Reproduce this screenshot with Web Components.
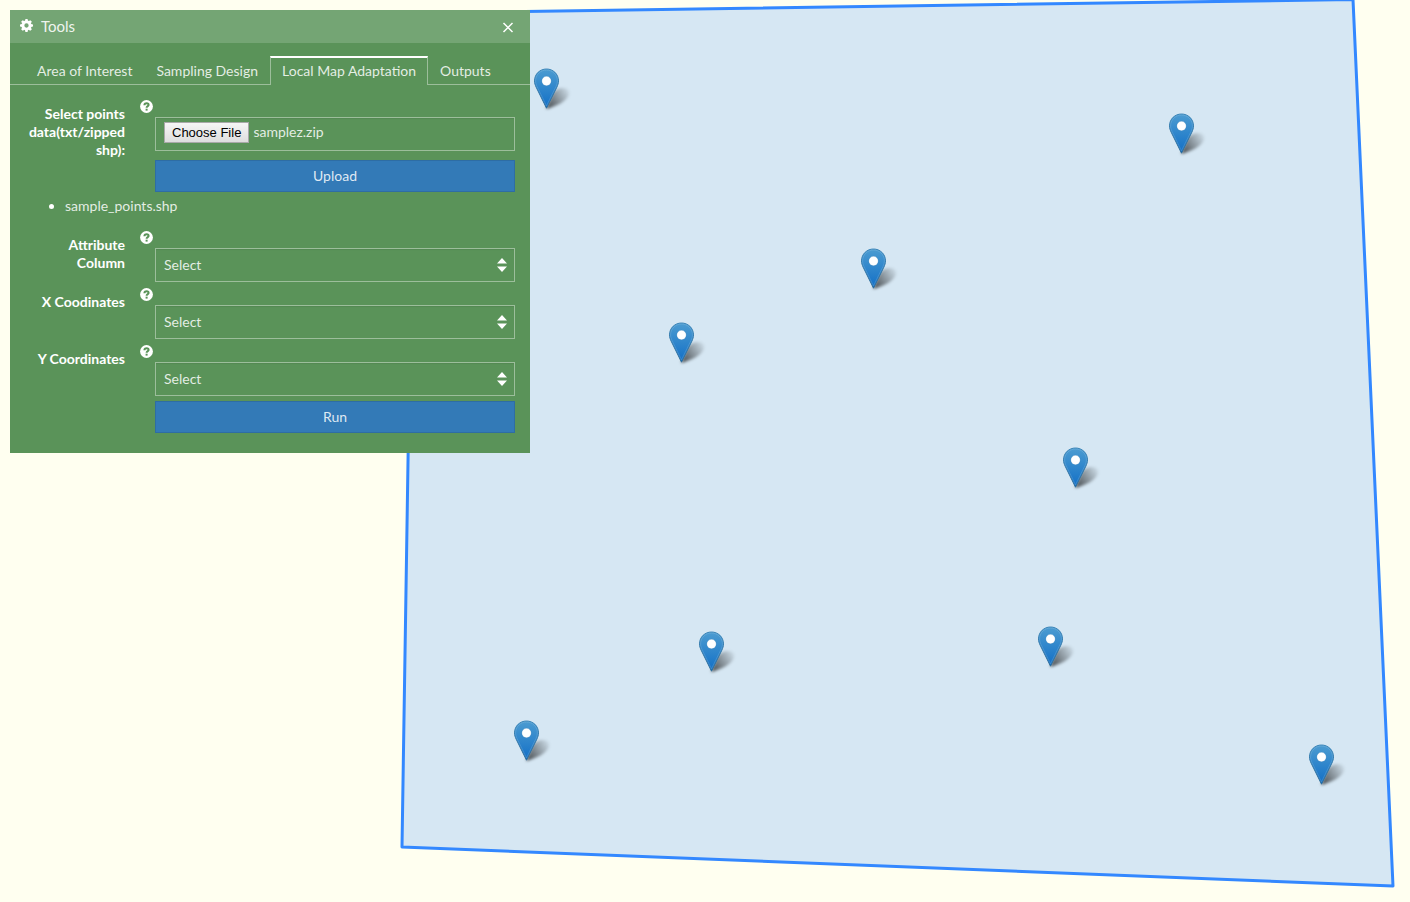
<!DOCTYPE html>
<html lang="en">
<head>
<meta charset="utf-8">
<title>Local Map Adaptation</title>
<style>
  html, body { height: 100%; }
  body { margin: 0; background: #fffff0; overflow: hidden; font: 14px/18px Lato, "Open Sans", sans-serif; color: rgba(255, 255, 255, .85); }
</style>
</head>
<body>
<map-view>
  <map-marker x="546" y="109"></map-marker>
  <map-marker x="1181" y="154"></map-marker>
  <map-marker x="873" y="289"></map-marker>
  <map-marker x="681" y="363"></map-marker>
  <map-marker x="1075" y="488"></map-marker>
  <map-marker x="711" y="672"></map-marker>
  <map-marker x="1050" y="667"></map-marker>
  <map-marker x="526" y="761"></map-marker>
  <map-marker x="1321" y="785"></map-marker>
  <tool-panel slot="overlay" heading="Tools">
    <tab-bar slot="tabs"></tab-bar>
    <file-field label="Select points data(txt/zipped shp):" filename="samplez.zip"></file-field>
    <action-button>Upload</action-button>
    <file-list><li>sample_points.shp</li></file-list>
    <select-field label="Attribute Column"></select-field>
    <select-field label="X Coodinates"></select-field>
    <select-field label="Y Coordinates"></select-field>
    <action-button>Run</action-button>
  </tool-panel>
</map-view>

<script>
const define = (name, markup, setup) => {
  const template = document.createElement('template');
  template.innerHTML = markup;
  customElements.define(name, class extends HTMLElement {
    constructor() {
      super();
      this.attachShadow({ mode: 'open' }).append(template.content.cloneNode(true));
    }
    connectedCallback() { if (setup) setup(this, this.shadowRoot); }
  });
};

define('map-view', `
  <style>
    :host { display: block; position: relative; height: 100%; overflow: hidden; }
    .area { position: absolute; inset: 0; width: 100%; height: 100%; }
    .overlay { position: absolute; top: 10px; left: 10px; width: min(520px, calc(100% - 20px)); }
  </style>
  <svg class="area" aria-hidden="true">
    <path d="M415 13 1353 -0.5 1393 886 402 847Z" fill="#3388ff" fill-opacity=".2" stroke="#3388ff" stroke-width="3" stroke-linejoin="round"/>
  </svg>
  <slot></slot>
  <div class="overlay"><slot name="overlay"></slot></div>`);

define('map-marker', `
  <style>
    :host { display: block; position: absolute; width: 41px; height: 41px; margin: -41px 0 0 -12px; }
    svg { display: block; overflow: visible; }
  </style>
  <svg width="41" height="41" viewBox="0 0 41 41" role="img" aria-label="Marker">
    <defs>
      <linearGradient id="fill" x1="0" y1="0" x2="0" y2="1"><stop offset="0" stop-color="#4c9cd1"/><stop offset="1" stop-color="#126fc6"/></linearGradient>
      <linearGradient id="edge" x1="0" y1="0" x2="0" y2="1"><stop offset="0" stop-color="#3883b7"/><stop offset="1" stop-color="#2e6c97"/></linearGradient>
      <linearGradient id="shade" gradientUnits="userSpaceOnUse" x1="13" y1="38" x2="35" y2="24"><stop offset="0" stop-opacity=".65"/><stop offset=".45" stop-opacity=".38"/><stop offset="1" stop-opacity=".06"/></linearGradient>
      <filter id="soft" x="-30%" y="-30%" width="160%" height="160%"><feGaussianBlur stdDeviation="1.5"/></filter>
    </defs>
    <path d="M12 41 18 26C22 19 33 18 35 23C37 29 28 37 12 41Z" fill="url(#shade)" filter="url(#soft)"/>
    <path d="M12.5 1C6 1 .5 6 .5 12.900c0 2.200.7 4.200 1.600 6.200L12.500 40.200 22.900 19.100c.9-2 1.600-4 1.600-6.200C24.500 6 19 1 12.500 1Z" fill="url(#fill)" stroke="url(#edge)"/>
    <path d="M12.500 2C6.600 2 1.600 6.600 1.600 12.900c0 2 .6 3.800 1.500 5.800L12.500 37.800 21.900 18.700c.9-2 1.500-3.800 1.500-5.800C23.400 6.600 18.400 2 12.500 2Z" fill="none" stroke="#fff" stroke-opacity=".13"/>
    <circle cx="12.500" cy="13" r="4.700" fill="#fff" stroke="#3277a8" stroke-opacity=".4" stroke-width=".6"/>
  </svg>`, (host) => {
  host.style.left = host.getAttribute('x') + 'px';
  host.style.top = host.getAttribute('y') + 'px';
});

define('tool-panel', `
  <style>
    :host { display: block; background: #5a9359; }
    header { display: flex; align-items: center; gap: 8px; height: 33px; padding: 0 15px 0 10px; background: #74a574; }
    h2 { flex: 1; margin: 0; padding-bottom: 2px; font-size: 15px; line-height: 18px; font-weight: 400; color: rgba(255, 255, 255, .9); }
    header > svg { padding-bottom: 2px; }
    svg { display: block; }
    button { display: flex; border: 0; padding: 0; background: none; cursor: pointer; }
    .tabs { padding-top: 13px; }
    .body { padding: 15px 15px 20px; }
  </style>
  <header>
    <svg width="13" height="13" viewBox="0 0 12 12" aria-hidden="true">
      <g fill="#fff"><path fill-rule="evenodd" d="M6 1.300a4.700 4.700 0 1 0 0 9.400 4.700 4.700 0 1 0 0-9.400ZM6 4a2 2 0 1 1 0 4 2 2 0 1 1 0-4Z"/>
      <path id="tooth" d="M4.600 2 5 0H7L7.400 2Z"/><use href="#tooth" transform="rotate(45 6 6)"/><use href="#tooth" transform="rotate(90 6 6)"/><use href="#tooth" transform="rotate(135 6 6)"/><use href="#tooth" transform="rotate(180 6 6)"/><use href="#tooth" transform="rotate(225 6 6)"/><use href="#tooth" transform="rotate(270 6 6)"/><use href="#tooth" transform="rotate(315 6 6)"/></g>
    </svg>
    <h2></h2>
    <button type="button" aria-label="Close"><svg width="14" height="14" viewBox="0 0 14 14"><path d="M2.500 3 11.500 12M11.500 3 2.500 12" stroke="#fff" stroke-width="1.500" fill="none"/></svg></button>
  </header>
  <div class="tabs"><slot name="tabs"></slot></div>
  <div class="body"><slot></slot></div>`, (host, root) => {
  root.querySelector('h2').textContent = host.getAttribute('heading');
});

define('tab-bar', `
  <style>
    :host { display: block; --line: rgba(255, 255, 255, .4); }
    nav { display: flex; height: 29px; }
    nav::before, nav::after { content: ""; border-bottom: 1px solid var(--line); }
    nav::before { width: 15px; }
    nav::after { flex: 1; }
    a { box-sizing: border-box; padding: 6px 12px 0; border-bottom: 1px solid var(--line); color: inherit; text-decoration: none; white-space: nowrap; }
    a[aria-current] { padding: 4px 11px 0; border: solid var(--line); border-width: 2px 1px 0; border-top-color: #fff; }
  </style>
  <nav><a href="#area">Area of Interest</a><a href="#sampling">Sampling Design</a><a href="#local" aria-current="page">Local Map Adaptation</a><a href="#outputs">Outputs</a></nav>`);

define('help-icon', `
  <style>:host { display: block; width: 13px; height: 13px; } svg { display: block; }</style>
  <svg width="13" height="13" viewBox="0 0 13 13" role="img" aria-label="Help">
    <circle cx="6.500" cy="6.500" r="6.400" fill="#fff"/>
    <path d="M4.400 5.200C4.400 3.700 5.500 3.200 6.600 3.200 7.800 3.200 8.600 3.900 8.600 4.900 8.600 6.100 6.600 6.100 6.600 7.800" fill="none" stroke="#5a9359" stroke-width="2"/>
    <rect x="5.600" y="8.700" width="2" height="1.900" fill="#5a9359"/>
  </svg>`);

const fieldStyle = `
  :host { display: grid; grid-template-columns: 100px 13px 1fr; column-gap: 15px; }
  label { padding-top: 5px; text-align: right; font-weight: 700; line-height: 18px; color: #fff; }
  .control { display: grid; align-content: start; margin: 17px 0 0 -13px; }
  input, select { box-sizing: border-box; width: 100%; height: 34px; margin: 0; border: 1px solid rgba(255, 255, 255, .4); border-radius: 0; background: transparent; font: inherit; color: inherit; box-shadow: inset 0 1px 1px rgba(0, 0, 0, .075); }`;

define('file-field', `
  <style>${fieldStyle}
    :host { margin-bottom: 1px; }
    input { padding: 4px 8px; }
    input::file-selector-button { box-sizing: border-box; height: 21px; margin: 0 4px 0 0; padding: 0 7px; border: 1px solid #a9a9a9; border-radius: 0; background: linear-gradient(#f6f6f6, #dedede); color: #000; font: 13px/18px "Liberation Sans", Arial, sans-serif; }
  </style>
  <label for="control"></label><help-icon></help-icon>
  <div class="control"><input id="control" type="file"></div>`, (host, root) => {
  root.querySelector('label').textContent = host.getAttribute('label');
  const transfer = new DataTransfer();
  transfer.items.add(new File([''], host.getAttribute('filename')));
  root.querySelector('input').files = transfer.files;
});

define('select-field', `
  <style>${fieldStyle}
    :host { margin-bottom: 6px; }
    :host(:last-of-type) { margin-bottom: 5px; }
    select { appearance: none; padding: 0 24px 0 8px; grid-area: 1 / 1; }
    svg { grid-area: 1 / 1; place-self: center end; margin-right: 8px; pointer-events: none; }
  </style>
  <label for="control"></label><help-icon></help-icon>
  <div class="control">
    <select id="control"><option>Select</option></select>
    <svg width="10" height="14" viewBox="0 0 10 14" aria-hidden="true"><path d="M0 5.500 5 0 10 5.500ZM0 8.500 5 14 10 8.500Z" fill="#fff"/></svg>
  </div>`, (host, root) => {
  root.querySelector('label').textContent = host.getAttribute('label');
});

define('action-button', `
  <style>
    :host { display: block; margin-left: 130px; }
    button { display: block; width: 100%; height: 32px; padding: 0; border: 1px solid #2e6da4; background: #337ab7; font: inherit; color: inherit; cursor: pointer; }
  </style>
  <button type="button"><slot></slot></button>`);

define('file-list', `
  <style>
    :host { display: block; margin: 5px 0 16px; }
    ul { margin: 0; padding-left: 40px; }
    ::slotted(li)::marker { color: #fff; }
  </style>
  <ul><slot></slot></ul>`);
</script>
</body>
</html>
